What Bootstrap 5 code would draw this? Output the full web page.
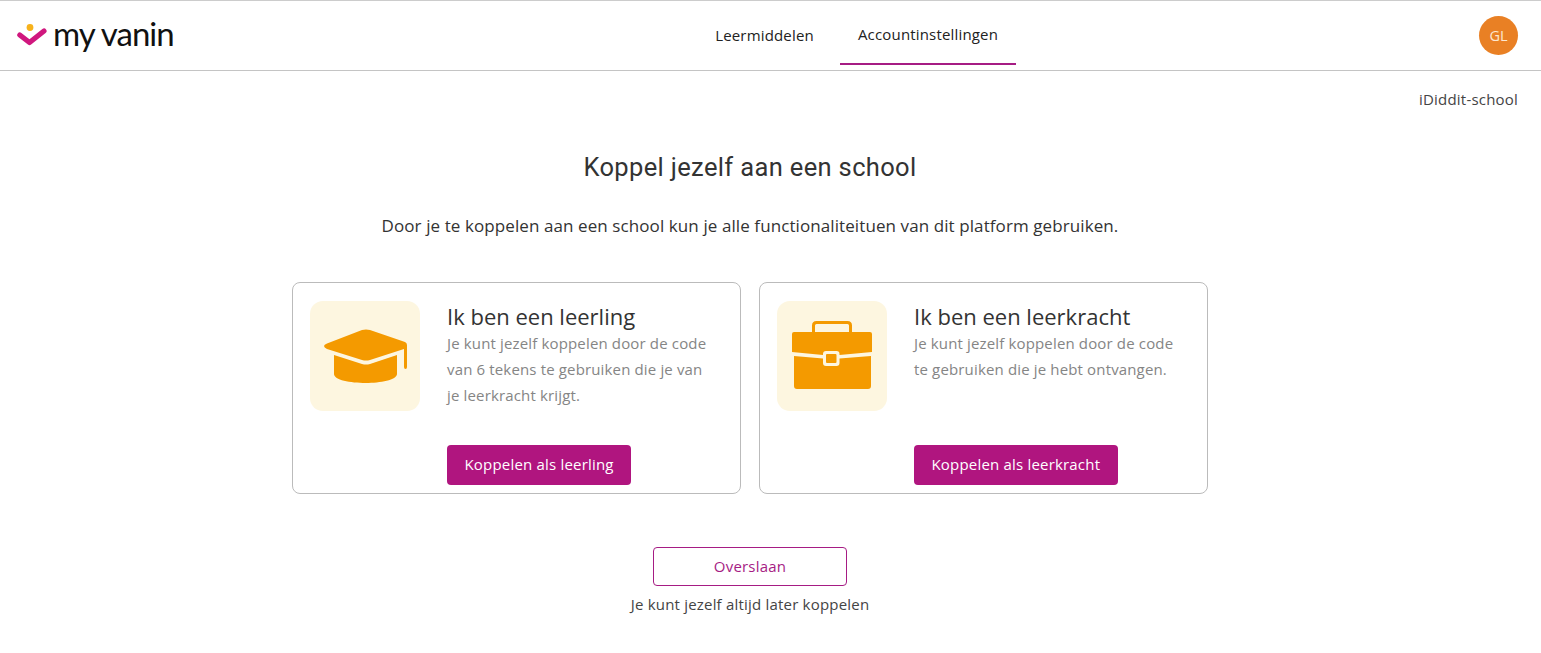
<!DOCTYPE html>
<html lang="nl">
<head>
<meta charset="utf-8">
<title>my vanin</title>
<link href="https://cdn.jsdelivr.net/npm/bootstrap@5.3.0/dist/css/bootstrap.min.css" rel="stylesheet">
<style>
body{font-family:"Open Sans",sans-serif;color:#333;background:#fff;overflow:hidden}
.topbar{height:71px;border-top:1px solid #ccc;border-bottom:1px solid #c4c4c4;padding:0 23px 0 17px}
.brand{width:300px;gap:6px;color:#111;text-decoration:none}
.brand-name{font-family:"Lato",sans-serif;font-size:33px;line-height:1;letter-spacing:-.95px;color:#111;margin-top:-5px}
.tabs{gap:8px;margin-left:178px}
.tab-link{display:block;height:64px;padding:0;font-size:15px;font-weight:500;letter-spacing:.17px;color:#222;text-decoration:none;text-align:center}
.tab-link.current{line-height:67px;border-bottom:2px solid #a61c84;width:176px}
.tab-first{width:135px;line-height:69px}
.avatar{width:39px;height:39px;background:#e98024;color:#fde7d0;font-size:14.5px}
.avatar-slot{width:300px}
.school{font-size:15px;letter-spacing:.2px;line-height:20px;text-align:right;padding:18px 23px 0 0;color:#444}
.page-body{padding-right:41px}
.page-title{font-family:"Roboto",sans-serif;font-size:25.5px;font-weight:400;line-height:32px;margin:42px 0 0;color:#333;letter-spacing:.35px}
.intro{font-size:17px;letter-spacing:.09px;line-height:24px;margin:31px 0 0;color:#333}
.choices{width:916px;gap:18px;margin-top:44px}
.choice{width:449px;height:212px;border:1px solid #bbb;border-radius:8px;padding:18px 25px 8px 17px;gap:27px}
.icon-box{width:110px;height:110px;background:#fdf6e0;border-radius:13px;flex:none}
.icon-box .case-icon{margin-top:-2px}
.choice-title{font-size:22px;font-weight:400;line-height:30px;margin:0;color:#333}
.choice-text{font-size:15px;line-height:26px;color:#858585;margin:-1px 0 0;letter-spacing:.15px}
.btn-primary-vanin{background:#b0157f;border:0;color:#fff;font-size:15px;font-weight:500;letter-spacing:.19px;height:40px;line-height:38px;padding:0 17.5px 2px;border-radius:4px;white-space:nowrap}
.btn-primary-vanin:hover{background:#96106c;color:#fff}
.btn-skip{width:194px;height:39px;border:1px solid #a61c84;border-radius:4px;color:#a61c84;background:#fff;font-size:15px;font-weight:500;letter-spacing:.2px;line-height:37px;padding:0;margin-top:53px}
.skip-note{font-size:15px;letter-spacing:.2px;line-height:20px;margin:8px 0 0;color:#444}
</style>
</head>
<body>
<nav class="topbar d-flex align-items-center justify-content-between">
  <a class="brand d-flex align-items-center" href="#">
    <svg width="30" height="24" viewBox="0 0 30 24" aria-hidden="true">
      <circle cx="13" cy="3.500" r="3.400" fill="#f7b21b"/>
      <path d="M2.800 11 L12.500 18.500 L27 7" fill="none" stroke="#d0177e" stroke-width="5.200" stroke-linecap="round" stroke-linejoin="round"/>
    </svg>
    <span class="brand-name">my vanin</span>
  </a>
  <div class="tabs d-flex align-self-start">
    <a class="tab-link tab-first" href="#">Leermiddelen</a>
    <a class="tab-link current" href="#">Accountinstellingen</a>
  </div>
  <div class="avatar-slot d-flex justify-content-end">
    <div class="avatar rounded-circle d-flex align-items-center justify-content-center">GL</div>
  </div>
</nav>
<div class="school">iDiddit-school</div>
<main class="page-body d-flex flex-column align-items-center">
  <h1 class="page-title">Koppel jezelf aan een school</h1>
  <p class="intro">Door je te koppelen aan een school kun je alle functionaliteituen van dit platform gebruiken.</p>
  <div class="choices d-flex">
    <div class="choice d-flex">
      <div class="icon-box d-flex align-items-center justify-content-center">
        <svg width="83" height="54" viewBox="0 0 83 54" aria-hidden="true">
          <path d="M38 1 Q42 0 46 1 L81 13 Q83 14 83 16 L83 38 Q83 40 81.500 40 Q80 40 80 38 L80 20 L46 31 Q42 32 38 31 L3 20 Q0 18.500 0 17 Q0 15.500 3 14.500 Z" fill="#f49a00"/>
          <path d="M10 26 L38 35 Q42 36 46 35 L73 26 L73 45 C73 51 56 54 42 54 C26 54 10 51 10 45 Z" fill="#f49a00"/>
        </svg>
      </div>
      <div class="d-flex flex-column flex-grow-1">
        <h2 class="choice-title">Ik ben een leerling</h2>
        <p class="choice-text">Je kunt jezelf koppelen door de code van 6 tekens te gebruiken die je van je leerkracht krijgt.</p>
        <div class="mt-auto"><button class="btn btn-primary-vanin" type="button">Koppelen als leerling</button></div>
      </div>
    </div>
    <div class="choice d-flex">
      <div class="icon-box d-flex align-items-center justify-content-center">
        <svg class="case-icon" width="80" height="68" viewBox="0 0 80 68" aria-hidden="true">
          <path d="M21.500 11 L21.500 4.500 Q21.500 1.500 24.500 1.500 L55.500 1.500 Q58.500 1.500 58.500 4.500 L58.500 11" fill="none" stroke="#f49a00" stroke-width="3"/>
          <path d="M2 11 L78 11 Q80 11 80 13 L80 31 L47.500 34 L47.500 33 Q47.500 30 44.500 30 L34 30 Q31 30 31 33 L31 34 L0 31 L0 13 Q0 11 2 11 Z" fill="#f49a00"/>
          <path d="M2 35 L31 37.500 L31 42 Q31 45 34 45 L44.500 45 Q47.500 45 47.500 42 L47.500 37.500 L79 35 L79 65 Q79 68 76 68 L5 68 Q2 68 2 65 Z" fill="#f49a00"/>
          <rect x="34" y="33" width="10.500" height="9" rx="1" fill="#f49a00"/>
        </svg>
      </div>
      <div class="d-flex flex-column flex-grow-1">
        <h2 class="choice-title">Ik ben een leerkracht</h2>
        <p class="choice-text">Je kunt jezelf koppelen door de code te gebruiken die je hebt ontvangen.</p>
        <div class="mt-auto"><button class="btn btn-primary-vanin" type="button">Koppelen als leerkracht</button></div>
      </div>
    </div>
  </div>
  <button class="btn btn-skip" type="button">Overslaan</button>
  <p class="skip-note">Je kunt jezelf altijd later koppelen</p>
</main>
</body>
</html>
